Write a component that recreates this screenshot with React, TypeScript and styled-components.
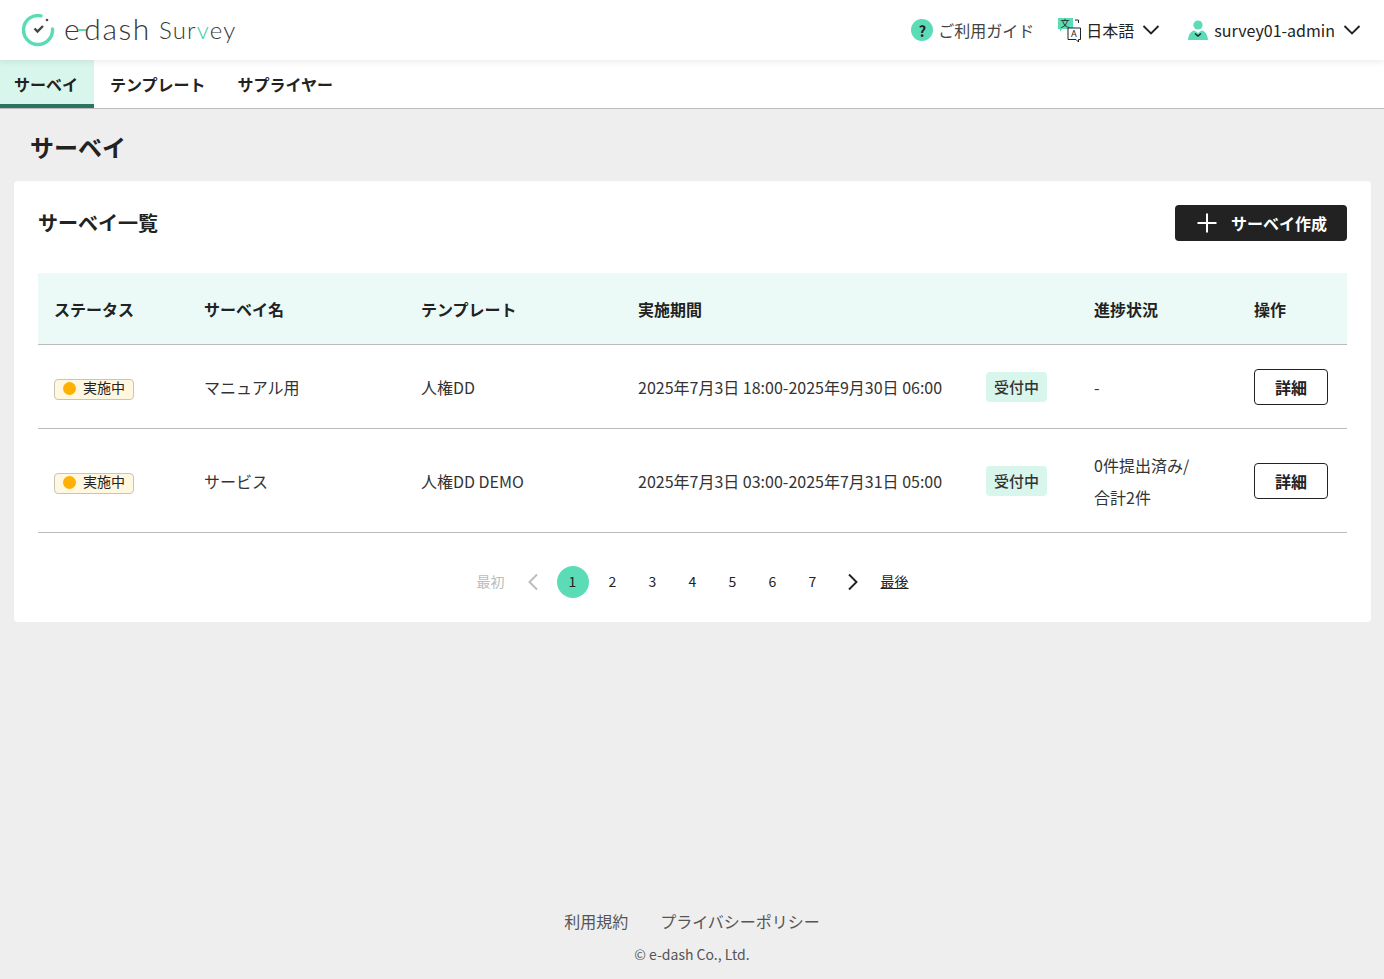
import * as React from 'react';
import styled, { createGlobalStyle } from 'styled-components';

const GlobalStyle = createGlobalStyle`
  html, body {
    margin: 0;
    padding: 0;
    background: #eeeeee;
    color: #222222;
    font-family: "Noto Sans CJK JP", "Noto Sans", sans-serif;
  }
  * { box-sizing: border-box; }
`;

const rows = [
  { name: 'マニュアル用', template: '人権DD', period: '2025年7月3日 18:00-2025年9月30日 06:00', progress: ['-'], tall: false },
  { name: 'サービス', template: '人権DD DEMO', period: '2025年7月3日 03:00-2025年7月31日 05:00', progress: ['0件提出済み/', '合計2件'], tall: true },
];

function Chevron({ dir = 'down', color = '#222222' }: { dir?: 'down' | 'left' | 'right'; color?: string }) {
  if (dir === 'down') {
    return (
      <svg width="18" height="12" viewBox="0 0 18 12" fill="none">
        <path d="M1.5 2 L9 9.5 L16.5 2" stroke={color} strokeWidth="1.9" />
      </svg>
    );
  }
  return (
    <svg width="12" height="18" viewBox="0 0 12 18" fill="none">
      <path d={dir === 'left' ? 'M10 1.5 L2.5 9 L10 16.5' : 'M2 1.5 L9.5 9 L2 16.5'} stroke={color} strokeWidth="1.9" />
    </svg>
  );
}

function LogoMark() {
  return (
    <svg width="34" height="34" viewBox="0 0 34 34" fill="none">
      <path d="M20 2.8 A14.5 14.5 0 1 0 31.5 16" stroke="#5cdcb6" strokeWidth="3.4" strokeLinecap="round" />
      <circle cx="26" cy="7" r="1.3" fill="#4a4a4a" />
      <path d="M13.5 15.5 L16.5 18.5 L22 13" stroke="#444444" strokeWidth="2.4" />
    </svg>
  );
}

function TranslateIcon() {
  return (
    <svg width="26" height="26" viewBox="0 0 26 26" fill="none">
      <path d="M1 1 H16 V12 H5 L3 15 V12 H1 Z" fill="#5cdcb6" />
      <text x="3.5" y="9.5" fontSize="9" fill="#222222" fontFamily="Noto Sans CJK JP">文</text>
      <path d="M11 11 H23.5 V22.5 H21.5 V25 L19 22.5 H11 Z" fill="#ffffff" stroke="#222222" strokeWidth="1" />
      <text x="14" y="20" fontSize="9" fill="#222222" fontFamily="Noto Sans">A</text>
      <path d="M18 3 H21.5 V6" stroke="#222222" strokeWidth="1" />
    </svg>
  );
}

function UserIcon() {
  return (
    <svg width="20" height="20" viewBox="0 0 20 20" fill="none">
      <circle cx="10" cy="5" r="4.6" fill="#5cdcb6" />
      <path d="M0 20 C0.5 14 3 11 6.5 10.5 L10 13 L13.5 10.5 C17 11 19.5 14 20 20 Z" fill="#5cdcb6" />
      <path d="M7 13.5 L10 16 L13 13.5" stroke="#222222" strokeWidth="1.5" />
    </svg>
  );
}

export default function App() {
  return (
    <Page>
      <GlobalStyle />
      <Header>
        <Logo>
          <LogoMark />
          <LogoWord>
            e<LogoDash />dash
          </LogoWord>
          <LogoProduct>
            Sur<LogoAccent>v</LogoAccent>ey
          </LogoProduct>
        </Logo>
        <HeaderMenu>
          <GuideItem>
            <HelpBadge>?</HelpBadge>
            <HeaderGuide>ご利用ガイド</HeaderGuide>
          </GuideItem>
          <LanguageItem>
            <TranslateIcon />
            <HeaderText>日本語</HeaderText>
            <Chevron />
          </LanguageItem>
          <HeaderItem>
            <UserIcon />
            <HeaderText>survey01-admin</HeaderText>
            <Chevron />
          </HeaderItem>
        </HeaderMenu>
      </Header>
      <Nav>
        <Tab $active>サーベイ</Tab>
        <Tab>テンプレート</Tab>
        <Tab>サプライヤー</Tab>
      </Nav>
      <PageTitle>サーベイ</PageTitle>
      <Card>
        <CardHead>
          <CardTitle>サーベイ一覧</CardTitle>
          <CreateButton>
            <svg width="20" height="20" viewBox="0 0 20 20" fill="none">
              <path d="M10 0.5 V19.5 M0.5 10 H19.5" stroke="#ffffff" strokeWidth="2" />
            </svg>
            サーベイ作成
          </CreateButton>
        </CardHead>
        <Table>
          <colgroup>
            <col width="150" />
            <col width="217" />
            <col width="217" />
            <col width="348" />
            <col width="108" />
            <col width="160" />
            <col width="109" />
          </colgroup>
          <thead>
            <tr>
              <Th>ステータス</Th>
              <Th>サーベイ名</Th>
              <Th>テンプレート</Th>
              <Th colSpan={2}>実施期間</Th>
              <Th>進捗状況</Th>
              <Th>操作</Th>
            </tr>
          </thead>
          <tbody>
            {rows.map((row) => (
              <Row key={row.name} $tall={row.tall}>
                <Td>
                  <StatusChip>
                    <StatusDot />
                    実施中
                  </StatusChip>
                </Td>
                <Td>{row.name}</Td>
                <Td>{row.template}</Td>
                <Td>{row.period}</Td>
                <Td>
                  <OpenBadge>受付中</OpenBadge>
                </Td>
                <Td>
                  {row.progress.map((line) => (
                    <ProgressLine key={line}>{line}</ProgressLine>
                  ))}
                </Td>
                <Td>
                  <DetailButton>詳細</DetailButton>
                </Td>
              </Row>
            ))}
          </tbody>
        </Table>
        <Pager>
          <PagerEdge $disabled>最初</PagerEdge>
          <PagerArrow $side="left">
            <Chevron dir="left" color="#bbbbbb" />
          </PagerArrow>
          <PageNumbers>
            {[1, 2, 3, 4, 5, 6, 7].map((n) => (
              <PageNumber key={n} $current={n === 1}>
                {n}
              </PageNumber>
            ))}
          </PageNumbers>
          <PagerArrow $side="right">
            <Chevron dir="right" />
          </PagerArrow>
          <PagerEdge>最後</PagerEdge>
        </Pager>
      </Card>
      <Footer>
        <FooterLinks>
          <span>利用規約</span>
          <span>プライバシーポリシー</span>
        </FooterLinks>
        <Copyright>© e-dash Co., Ltd.</Copyright>
      </Footer>
    </Page>
  );
}

const Page = styled.div`
  display: flex;
  flex-direction: column;
  min-height: 979px;
`;
const Header = styled.header`
  position: relative;
  z-index: 1;
  display: flex;
  align-items: center;
  justify-content: space-between;
  height: 60px;
  padding: 0 23px 0 21px;
  background: #ffffff;
  box-shadow: 0 2px 6px rgba(0, 0, 0, 0.08);
`;
const Logo = styled.div`
  display: flex;
  align-items: center;
  color: #383838;
`;
const LogoWord = styled.span`
  display: flex;
  align-items: center;
  margin: -4px 0 0 9px;
  font-family: "Lato", sans-serif;
  font-size: 30px;
  font-weight: 300;
  letter-spacing: 1.6px;
  line-height: 1;
`;
const LogoDash = styled.i`
  width: 8px;
  height: 2px;
  margin: 3px -2px 0 -3px;
  background: #5cdcb6;
`;
const LogoProduct = styled.span`
  margin-left: 8px;
  font-family: "Lato", sans-serif;
  font-size: 24px;
  font-weight: 300;
  letter-spacing: 1.2px;
  line-height: 1;
`;
const LogoAccent = styled.span`
  color: #3fcfa6;
`;
const HeaderMenu = styled.div`
  display: flex;
  align-items: center;
`;
const HeaderItem = styled.div`
  display: flex;
  align-items: center;
  gap: 6px;
  margin-left: 24px;
  font-size: 16px;
`;
const GuideItem = styled(HeaderItem)`
  margin-right: -2px;
  gap: 5px;
`;
const LanguageItem = styled(HeaderItem)`
  margin-right: 4px;
  & > svg:first-child {
    margin: 0 -3px 0 -1px;
  }
`;
const HelpBadge = styled.span`
  display: flex;
  align-items: center;
  justify-content: center;
  width: 22px;
  height: 22px;
  border-radius: 50%;
  background: #5cdcb6;
  font-size: 15px;
  font-weight: 700;
`;
const HeaderText = styled.span`
  line-height: 1;
  margin-right: 2px;
`;
const HeaderGuide = styled(HeaderText)`
  color: #444444;
`;
const Nav = styled.nav`
  display: flex;
  height: 49px;
  background: #ffffff;
  border-bottom: 1px solid #bbbbbb;
`;
const Tab = styled.div<{ $active?: boolean }>`
  display: flex;
  align-items: center;
  height: 48px;
  padding: ${(p) => (p.$active ? '4px 16px 0 14px' : '4px 16px 0')};
  font-size: 16px;
  font-weight: 700;
  background: ${(p) => (p.$active ? '#d8f6ec' : 'transparent')};
  border-bottom: 4px solid ${(p) => (p.$active ? '#2a7560' : 'transparent')};
`;
const PageTitle = styled.h1`
  margin: 0;
  padding: 20px 30px 0;
  height: 72px;
  font-size: 24px;
  font-weight: 700;
  line-height: 36px;
`;
const Card = styled.section`
  margin: 0 13px 0 14px;
  padding: 24px;
  background: #ffffff;
  border-radius: 4px;
`;
const CardHead = styled.div`
  display: flex;
  align-items: center;
  justify-content: space-between;
  height: 36px;
  margin-bottom: 32px;
`;
const CardTitle = styled.h2`
  margin: 0;
  font-size: 20px;
  font-weight: 700;
  line-height: 36px;
`;
const CreateButton = styled.button`
  display: flex;
  align-items: center;
  gap: 14px;
  width: 172px;
  height: 36px;
  padding: 0 0 0 22px;
  border: 0;
  border-radius: 4px;
  background: #222222;
  color: #ffffff;
  font-family: inherit;
  font-size: 16px;
  font-weight: 700;
`;
const Table = styled.table`
  width: 100%;
  table-layout: fixed;
  border-collapse: collapse;
`;
const Th = styled.th`
  height: 71px;
  padding: 1px 16px 0;
  background: #ebfaf6;
  border-bottom: 1px solid #bbbbbb;
  font-size: 16px;
  font-weight: 700;
  text-align: left;
`;
const Row = styled.tr<{ $tall: boolean }>`
  height: ${(p) => (p.$tall ? '104px' : '84px')};
  border-bottom: 1px solid #bbbbbb;
`;
const Td = styled.td`
  padding: 2px 16px 0;
  font-size: 16px;
  color: #333333;
  white-space: nowrap;
`;
const StatusChip = styled.span`
  display: inline-flex;
  align-items: center;
  gap: 7px;
  width: 80px;
  height: 21px;
  padding: 0 0 4px 8px;
  border: 1px solid #c9c4b4;
  border-radius: 4px;
  background: #fff7df;
  color: #222222;
  font-size: 14px;
  line-height: 1;
  vertical-align: middle;
`;
const StatusDot = styled.i`
  width: 13px;
  height: 13px;
  margin-top: 2px;
  border-radius: 50%;
  background: #ffb000;
`;
const OpenBadge = styled.span`
  display: inline-flex;
  align-items: center;
  justify-content: center;
  width: 61px;
  height: 30px;
  padding-bottom: 2px;
  border-radius: 4px;
  background: #d8f6ec;
  font-size: 15px;
  font-weight: 500;
  vertical-align: middle;
`;
const ProgressLine = styled.div`
  line-height: 32px;
`;
const DetailButton = styled.button`
  display: block;
  width: 74px;
  height: 36px;
  padding: 0;
  border: 1px solid #222222;
  border-radius: 4px;
  background: #ffffff;
  color: #222222;
  font-family: inherit;
  font-size: 16px;
  font-weight: 700;
`;
const Pager = styled.div`
  display: flex;
  align-items: center;
  justify-content: center;
  height: 32px;
  margin-top: 33px;
  font-size: 14px;
`;
const PagerEdge = styled.span<{ $disabled?: boolean }>`
  padding-bottom: 2px;
  color: ${(p) => (p.$disabled ? '#bbbbbb' : '#222222')};
  text-decoration: ${(p) => (p.$disabled ? 'none' : 'underline')};
`;
const PagerArrow = styled.span<{ $side: 'left' | 'right' }>`
  display: flex;
  align-items: center;
  justify-content: center;
  width: 52px;
  padding-${(p) => p.$side}: 4px;
`;
const PageNumbers = styled.div`
  display: flex;
  gap: 8px;
`;
const PageNumber = styled.span<{ $current: boolean }>`
  display: flex;
  align-items: center;
  justify-content: center;
  width: 32px;
  height: 32px;
  padding-bottom: 1px;
  border-radius: 50%;
  background: ${(p) => (p.$current ? '#5cdcb6' : 'transparent')};
`;
const Footer = styled.footer`
  display: flex;
  flex-direction: column;
  align-items: center;
  margin-top: auto;
  padding-bottom: 13px;
  color: #555555;
`;
const FooterLinks = styled.div`
  display: flex;
  gap: 32px;
  font-size: 16px;
  line-height: 24px;
`;
const Copyright = styled.div`
  margin-top: 9px;
  font-size: 14px;
  line-height: 24px;
`;
